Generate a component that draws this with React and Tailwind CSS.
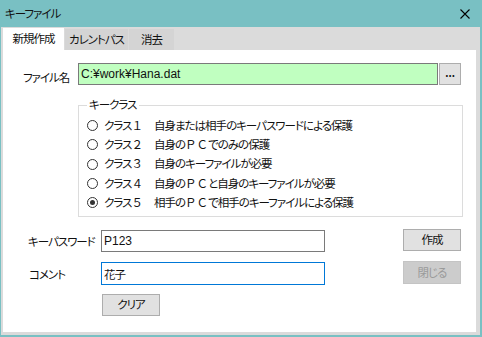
import { useState } from "react";

const classes = [
  { id: 1, num: "１", text: ["自身または相手のキーパスワードによる保護"] },
  { id: 2, num: "２", text: ["自身の", "ＰＣ", "でのみの保護"] },
  { id: 3, num: "３", text: ["自身のキーファイルが必要"] },
  { id: 4, num: "４", text: ["自身の", "ＰＣ", "と自身のキーファイルが必要"] },
  { id: 5, num: "５", text: ["相手の", "ＰＣ", "で相手のキーファイルによる保護"] },
];

function Radio({ checked }) {
  return (
    <span className="w-[11px] h-[11px] rounded-full border border-[#333] bg-white flex items-center justify-center shrink-0">
      {checked && <span className="w-[5px] h-[5px] rounded-full bg-[#333]" />}
    </span>
  );
}

export default function App() {
  let [selected, setSelected] = useState(5);
  let [password, setPassword] = useState("P123");
  let [comment, setComment] = useState("花子");

  return (
    <div
      className="w-[482px] h-[337px] bg-[#79c0c3] flex flex-col text-[11.5px] tracking-[-1px] text-[#111] leading-none whitespace-nowrap [font-feature-settings:'palt']"
      style={{ fontFamily: '"Noto Sans CJK JP", "Liberation Sans", sans-serif' }}
    >
      {/* title bar */}
      <div className="h-[27px] flex items-center justify-between pl-[5px] pr-[12px]">
        <span>キーファイル</span>
        <svg width="10" height="10" viewBox="0 0 10 10">
          <path d="M0.5 0.5 9.5 9.5 M9.5 0.5 0.5 9.5" stroke="#000" strokeWidth="1.1" />
        </svg>
      </div>

      <div className="flex-1 flex flex-col ml-[1px] mr-[2px] mb-[2px] bg-[#dbdbdb] pl-[2px] pr-[4px] pb-[3px]">
        {/* tabs */}
        <div className="h-[23px] flex items-end">
          <div className="w-[61px] h-[22px] bg-white flex items-center justify-center">新規作成</div>
          <div className="ml-[1px] w-[63px] h-[21px] bg-[#d4d4d4] flex items-center justify-center">カレントパス</div>
          <div className="ml-[1px] w-[45px] h-[21px] bg-[#d4d4d4] flex items-center justify-center">消去</div>
        </div>

        {/* panel */}
        <div className="flex-1 bg-white flex flex-col pt-[13px]">
          <div className="flex items-center">
            <span className="w-[75px] pl-[20px] pt-[8px]">ファイル名</span>
            <div
              className="w-[360px] h-[22px] border border-[#7a7a7a] bg-[#c0ffc0] flex items-center pl-[2px] text-[12px] tracking-normal"
              style={{ fontFamily: '"Liberation Sans", "Noto Sans CJK JP", sans-serif' }}
            >
              C:¥work¥Hana.dat
            </div>
            <button className="ml-[1px] w-[22px] h-[22px] bg-[#e1e1e1] border border-[#adadad] flex items-end justify-center pb-[6px] text-[10px] font-bold tracking-normal">
              ...
            </button>
          </div>

          {/* group box */}
          <div className="relative mt-[20px] ml-[75px] w-[385px] h-[112px] border border-[#dcdcdc] pt-[10px] pl-[8px]">
            <span className="absolute -top-[7px] left-[8px] bg-white px-[2px]">キークラス</span>
            {classes.map((c) => (
              <div key={c.id} className="h-[19.3px] flex items-center cursor-pointer" onClick={() => setSelected(c.id)}>
                <Radio checked={selected === c.id} />
                <span className="ml-[6px] w-[50px]">
                  クラス<span className="[font-feature-settings:normal]">{c.num}</span>
                </span>
                <span>
                  {c.text.map((t, i) =>
                    t === "ＰＣ" ? (
                      <span key={i} className="[font-feature-settings:normal] tracking-normal">{t}</span>
                    ) : (
                      <span key={i}>{t}</span>
                    )
                  )}
                </span>
              </div>
            ))}
          </div>

          <div className="flex items-start mt-[12px]">
            <span className="w-[98px] pl-[25px] pt-[7px]">キーパスワード</span>
            <input
              className="w-[224px] h-[22px] border border-[#7a7a7a] px-[2px] outline-none mt-[1px] text-[12px] tracking-normal"
              style={{ fontFamily: '"Liberation Sans", "Noto Sans CJK JP", sans-serif' }}
              value={password}
              onChange={(e) => setPassword(e.target.value)}
            />
            <button className="ml-[78px] w-[58px] h-[22px] bg-[#e1e1e1] border border-[#adadad]">作成</button>
          </div>

          <div className="flex items-start mt-[9px]">
            <span className="w-[98px] pl-[26px] pt-[8px]">コメント</span>
            <input
              className="w-[224px] h-[23px] border border-[#0078d7] px-[2px] outline-none mt-[1px]"
              value={comment}
              onChange={(e) => setComment(e.target.value)}
            />
            <button disabled className="ml-[78px] w-[58px] h-[23px] bg-[#cccccc] border border-[#c4c4c4] text-[#9a9a9a]">
              閉じる
            </button>
          </div>

          <div className="mt-[9px] ml-[99px]">
            <button className="w-[58px] h-[22px] bg-[#e1e1e1] border border-[#adadad]" onClick={() => setComment("")}>
              クリア
            </button>
          </div>
        </div>
      </div>
    </div>
  );
}
